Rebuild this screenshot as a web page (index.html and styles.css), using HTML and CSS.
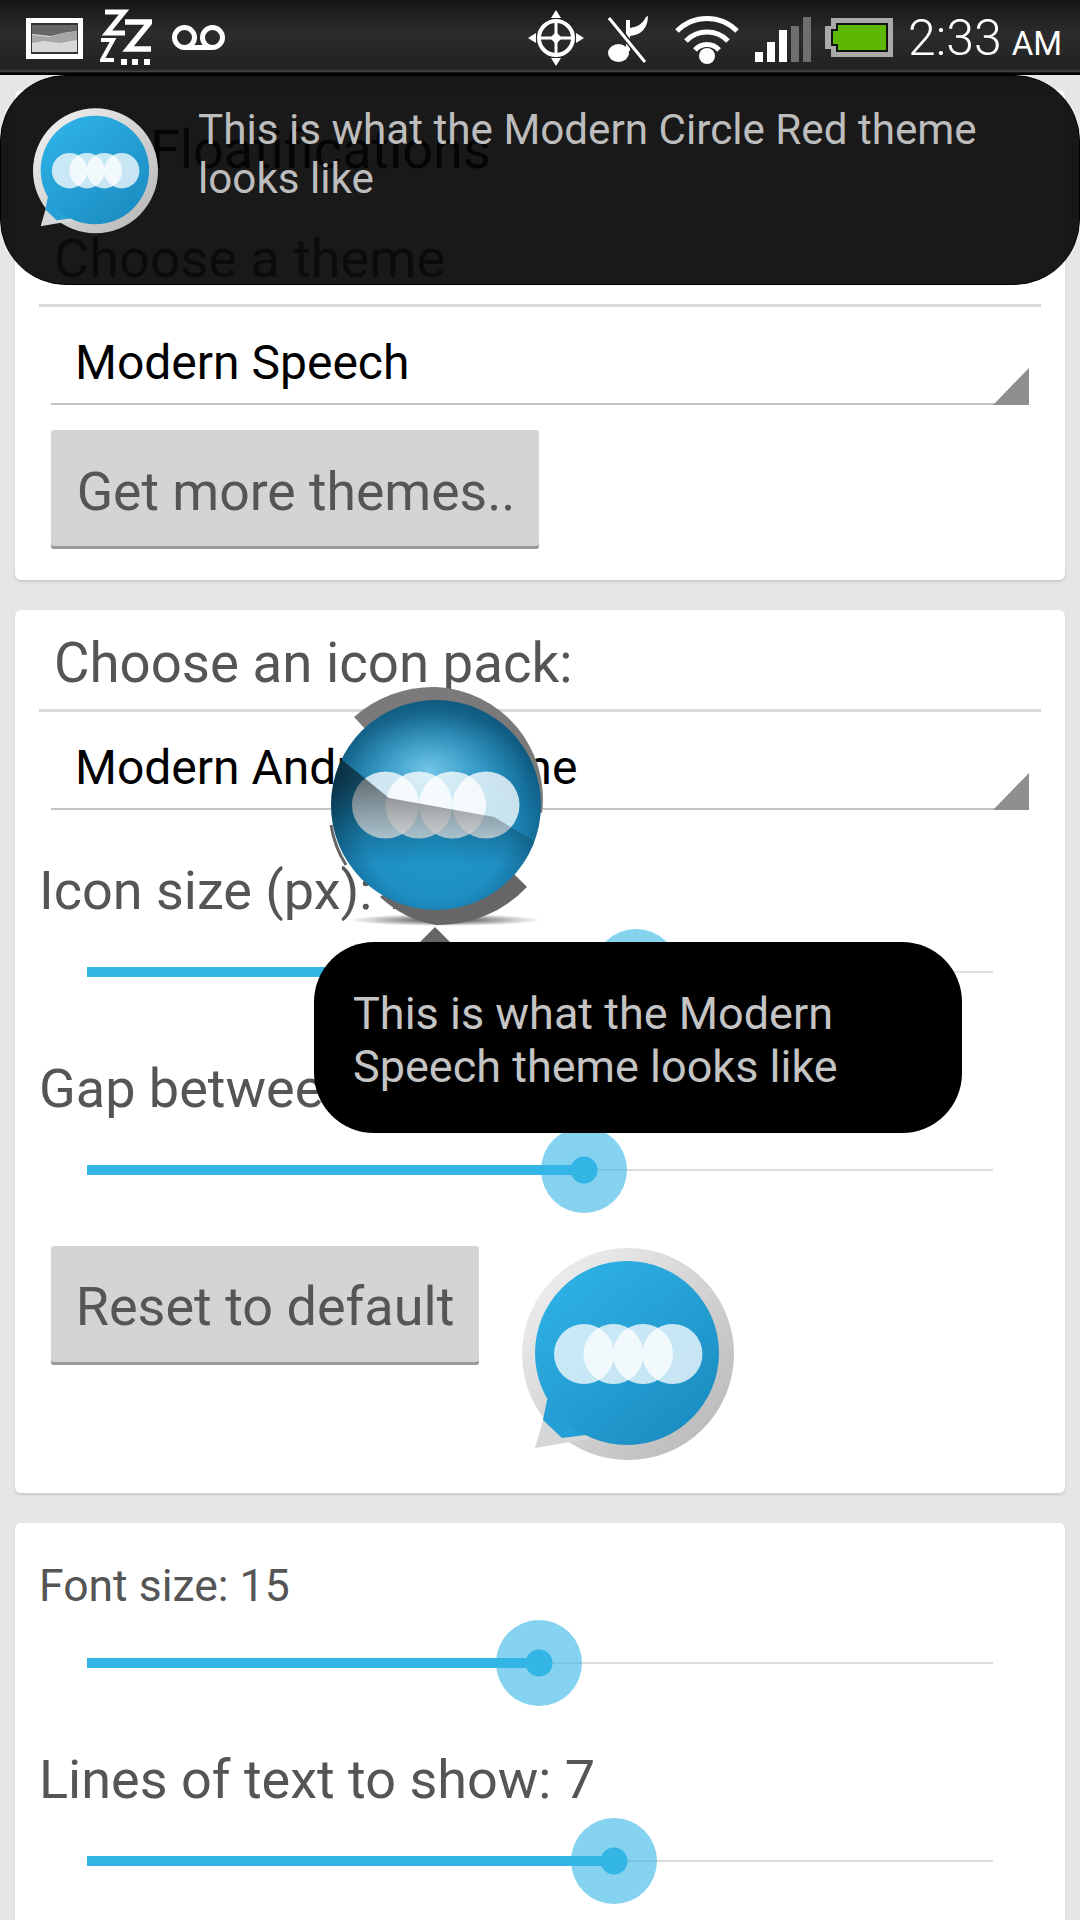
FILE: index.html
```html
<!DOCTYPE html>
<html lang="en">
<head>
<meta charset="utf-8">
<title>Floatifications</title>
<link rel="stylesheet" href="styles.css">
</head>
<body>
<svg class="defs" width="0" height="0" aria-hidden="true">
  <defs>
    <linearGradient id="ringG" x1="0" y1="0" x2="1" y2="1"><stop offset="0" stop-color="#f4f4f4"/><stop offset="1" stop-color="#b4b4b4"/></linearGradient>
    <linearGradient id="blueG" x1="0.1" y1="0" x2="0.9" y2="1"><stop offset="0" stop-color="#2fb4e8"/><stop offset="1" stop-color="#1a8abf"/></linearGradient>
    <radialGradient id="sphereG" cx="0.5" cy="0.62" r="0.56"><stop offset="0" stop-color="#1f9ad0"/><stop offset="0.6" stop-color="#1e8fc3"/><stop offset="1" stop-color="#0f5a80"/></radialGradient>
    <radialGradient id="glowG" cx="0.5" cy="0.5" r="0.5"><stop offset="0" stop-color="#74c6e6"/><stop offset="1" stop-color="#2a8fbb" stop-opacity="0"/></radialGradient>
    <radialGradient id="shadowG" cx="0.5" cy="0.5" r="0.5"><stop offset="0" stop-color="#000" stop-opacity="0.75"/><stop offset="1" stop-color="#000" stop-opacity="0"/></radialGradient>
    <linearGradient id="shadeG" gradientUnits="userSpaceOnUse" x1="0" y1="-25" x2="0" y2="60"><stop offset="0" stop-color="#000" stop-opacity="0.5"/><stop offset="1" stop-color="#000" stop-opacity="0"/></linearGradient>
    <clipPath id="sphereClip"><circle cx="0" cy="0" r="105"/></clipPath>
    <symbol id="bubble" viewBox="0 0 212 213">
      <circle cx="106" cy="106" r="106" fill="url(#ringG)"/>
      <polygon points="13,200 28,148 72,190" fill="#d4d6d8"/>
      <polygon points="25,152 21,172 40,190 64,187 60,120" fill="#25a0d6"/>
      <circle cx="105" cy="105" r="92" fill="url(#blueG)"/>
      <g fill="#fff" fill-opacity="0.75">
        <circle cx="62" cy="106" r="30"/><circle cx="91.500" cy="106" r="30"/><circle cx="121" cy="106" r="30"/><circle cx="150.500" cy="106" r="30"/>
      </g>
    </symbol>
  </defs>
</svg>

<header class="status">
  <svg class="st-img" viewBox="0 0 57 41"><rect x="2.500" y="2.500" width="52" height="36" fill="#333" stroke="#fff" stroke-width="5"/><rect x="6" y="7" width="45" height="27" fill="#d8d8d8"/><path d="M6 7h45v6l-14 2-12 3-19-2z" fill="#666"/><path d="M6 17l17 2 14-4 14-2v9l-17 3-16-2-12 2z" fill="#a6a6a6"/></svg>
  <svg class="st-zz" viewBox="0 0 52 57"><g fill="none" stroke="#fff" stroke-linejoin="miter"><path d="M5 3h19L7 24h18" stroke-width="5"/><path d="M25 13h25L28 40h23" stroke-width="5.500"/><path d="M1 31h12L2 51h12" stroke-width="4"/></g><g fill="#fff"><rect x="21" y="50" width="6" height="6"/><rect x="32" y="50" width="6" height="6"/><rect x="44" y="50" width="6" height="6"/></g></svg>
  <svg class="st-vm" viewBox="0 0 53 25"><g fill="none" stroke="#fff" stroke-width="5"><circle cx="12.500" cy="12.500" r="10"/><circle cx="40.500" cy="12.500" r="10"/><path d="M12 22.500h29"/></g></svg>
  <svg class="st-gps" viewBox="0 0 56 56"><g fill="none" stroke="#fff"><circle cx="28" cy="28" r="17" stroke-width="4"/><path d="M28 11v34M11 28h34" stroke-width="3"/></g><g fill="#fff"><polygon points="28,22 34,28 28,34 22,28"/><polygon points="28,0 23,8 33,8"/><polygon points="28,56 23,48 33,48"/><polygon points="0,28 8,23 8,33"/><polygon points="56,28 48,23 48,33"/></g></svg>
  <svg class="st-mus" viewBox="0 0 40 50"><g fill="#fff"><ellipse cx="10.500" cy="40" rx="10.500" ry="9"/><path d="M18 38V7h4v8c6-1 12-3 16-11l2-1c0 12-7 19-18 20v15z"/></g><path d="M2 6l35 43" stroke="#252525" stroke-width="6"/><path d="M1 5l36 44" stroke="#fff" stroke-width="3"/></svg>
  <svg class="st-wifi" viewBox="0 0 64 53"><g fill="none" stroke="#fff" stroke-width="5"><path d="M2 20a42 42 0 0 1 60 0"/><path d="M11 30a29 29 0 0 1 42 0"/><path d="M20 39a16 16 0 0 1 24 0"/></g><circle cx="32" cy="45" r="8" fill="#fff"/></svg>
  <svg class="st-sig" viewBox="0 0 56 45"><g fill="#fff"><rect x="0" y="35" width="8" height="10"/><rect x="12" y="25" width="8" height="20"/><rect x="24" y="13" width="8" height="32"/></g><g fill="#6f6f6f"><rect x="36" y="9" width="8" height="36"/><rect x="48" y="0" width="8" height="45"/></g></svg>
  <svg class="st-bat" viewBox="0 0 68 39"><path d="M6 0h62v39H6v-8H0V8h6z" fill="#aaa"/><path d="M11 5h52v29H11v-6H6V11h5z" fill="#111"/><path d="M13 7h48v25H13v-6H8V13h5z" fill="#5cb800"/></svg>
  <div class="clock">2:33<span class="ampm">AM</span></div>
</header>

<main class="page">
  <section class="card">
    <h1 class="title">Floatifications</h1>
    <h2 class="label-big top-gap">Choose a theme</h2>
    <div class="rule"></div>
    <div class="spinner">Modern Speech</div>
    <button class="btn btn-more">Get more themes..</button>
  </section>

  <section class="card card-two">
    <h2 class="label-big">Choose an icon pack:</h2>
    <div class="rule"></div>
    <div class="spinner">Modern Android Theme</div>
    <div class="label icon-label">Icon size (px): 70</div>
    <div class="slider slider-one"><div class="fill" style="width:550px"></div></div>
    <div class="label gap-label">Gap between icons: 50</div>
    <div class="slider"><div class="fill" style="width:498px"></div></div>
    <div class="reset-row">
      <button class="btn btn-reset">Reset to default</button>
      <svg class="preview"><use href="#bubble"/></svg>
    </div>
  </section>

  <section class="card card-three">
    <div class="label label-small">Font size: 15</div>
    <div class="slider slider-a"><div class="fill" style="width:453px"></div></div>
    <div class="label lines-label">Lines of text to show: 7</div>
    <div class="slider slider-b"><div class="fill" style="width:528px"></div></div>
  </section>
</main>

<aside class="toast-top">
  <svg class="toast-icon"><use href="#bubble"/></svg>
  <p class="toast-top-text">This is what the Modern Circle Red theme looks like</p>
</aside>

<svg class="float-icon" viewBox="-130 -130 260 270">
  <ellipse cx="9" cy="115" rx="96" ry="6" fill="url(#shadowG)"/>
  <path d="M-82 -88A120 120 0 0 1 0 -118A112 112 0 0 1 106 8L50 0L-68 -73Z" fill="#7a7a7a"/>
  <path d="M91 82A122 122 0 0 1 0 120A110 110 0 0 1 -56 92L0 50L74 65Z" fill="#666"/>
  <path d="M-105 20A106 106 0 0 0 -90 60" fill="none" stroke="#666" stroke-width="3"/>
  <polygon points="-1,122 -16,137 14,137" fill="#666"/>
  <circle cx="0" cy="0" r="105" fill="url(#sphereG)"/>
  <g clip-path="url(#sphereClip)">
    <ellipse cx="-7" cy="-35" rx="100" ry="70" fill="url(#glowG)"/>
    <g fill="#fff" fill-opacity="0.76">
      <circle cx="-50.500" cy="0" r="33.500"/><circle cx="-17" cy="0" r="33.500"/><circle cx="16.500" cy="0" r="33.500"/><circle cx="50" cy="0" r="33.500"/>
    </g>
    <polygon points="-95,-46 -47,-7 58,12 98,36 98,105 -105,105 -105,-46" fill="url(#shadeG)"/>
  </g>
</svg>

<aside class="toast-mid">This is what the Modern Speech theme looks like</aside>
</body>
</html>
```

FILE: styles.css
```css
* { box-sizing: border-box; }
html, body { margin: 0; padding: 0; }
body {
  position: relative;
  width: 1080px;
  height: 1920px;
  overflow: hidden;
  background: #e6e6e6;
  font-family: Roboto, "Liberation Sans", sans-serif;
  color: #555;
}
.defs { position: absolute; }

.status {
  display: flex;
  align-items: center;
  height: 75px;
  padding: 0 20px 3px 26px;
  background: linear-gradient(#161616, #2c2c2c 45%, #222 92%, #4a4a4a 96%, #000 97%);
}
.status svg { flex: none; display: block; }
.st-img { width: 57px; height: 41px; margin-top: 4px; }
.st-zz { width: 52px; height: 57px; margin-left: 17px; margin-top: 3px; }
.st-vm { width: 53px; height: 25px; margin-left: 20px; margin-top: 3px; }
.st-gps { width: 56px; height: 56px; margin-left: 303px; margin-top: 4px; }
.st-mus { width: 40px; height: 50px; margin-left: 24px; margin-top: 4px; }
.st-wifi { width: 64px; height: 53px; margin-left: 27px; margin-top: 3px; }
.st-sig { width: 56px; height: 45px; margin-left: 16px; margin-top: 7px; }
.st-bat { width: 68px; height: 39px; margin-left: 14px; margin-top: 3px; }
.clock { margin-left: 15px; font-size: 50px; font-weight: 300; color: #fff; white-space: nowrap; margin-top: 4px; }
.ampm { font-size: 33px; margin-left: 10px; font-weight: 400; }

.page { display: flex; flex-direction: column; gap: 30px; padding: 15px 15px 0; }
.card {
  background: #fff;
  border-radius: 6px;
  box-shadow: 0 2px 3px rgba(0, 0, 0, 0.12);
  padding: 30px 24px 31px;
}
.card-two { padding-top: 23px; padding-bottom: 32px; }
.card-three { padding-top: 32px; }

.title { margin: 0; padding-left: 111px; height: 60px; line-height: 60px; font-size: 54px; font-weight: 400; color: #000; }
.label-big { margin: 0; padding-left: 15px; height: 60px; line-height: 60px; font-size: 54px; font-weight: 400; color: #555; }
.card-two .label-big { font-size: 54.600px; }
.top-gap { margin-top: 49px; }
.rule { height: 3px; margin-top: 16px; background: #d9d9d9; }
.top-gap + .rule { margin-top: 15px; }

.spinner {
  position: relative;
  height: 98px;
  margin: 0 12px;
  padding: 15px 0 0 24px;
  display: flex;
  align-items: center;
  border-bottom: 2px solid #c4c4c4;
  font-size: 48px;
  color: #000;
}
.spinner::after {
  content: "";
  position: absolute;
  right: 0;
  bottom: -2px;
  width: 36px;
  height: 37px;
  background: #8f8f8f;
  clip-path: polygon(100% 0, 100% 100%, 0 100%);
}

.btn {
  display: block;
  height: 119px;
  margin: 25px 0 0 12px;
  padding: 4px 0 0;
  border: 0;
  border-radius: 3px;
  background: #d4d4d4;
  box-shadow: inset 0 -3px 0 #9a9a9a;
  font-family: inherit;
  font-size: 54px;
  color: #555;
}
.btn-more { width: 488px; font-size: 53.500px; padding-left: 2px; }
.btn-reset { width: 428px; margin: 0 0 0 12px; flex: none; padding-top: 2px; }

.label { height: 60px; line-height: 62px; padding-left: 0; font-size: 54px; color: #555; white-space: nowrap; }
.icon-label { margin-top: 50px; }
.gap-label { margin-top: 43px; }
.label-small { font-size: 44.500px; }
.lines-label { margin-top: 44px; line-height: 60px; }

.slider { position: relative; height: 86px; margin: 9px 48px 0; }
.slider::before { content: ""; position: absolute; left: 0; right: 0; top: 42px; height: 2px; background: #ddd; }
.fill { position: relative; height: 10px; top: 38px; background: #33b5e5; }
.fill::after {
  content: "";
  position: absolute;
  right: -42px;
  top: -38px;
  width: 86px;
  height: 86px;
  border-radius: 50%;
  background: radial-gradient(circle, #33b5e5 0 13px, rgba(51, 181, 229, 0.6) 14px);
}
.slider-a { margin-top: 5px; }
.slider-b { margin-top: 8px; }

.reset-row { display: flex; align-items: flex-start; margin-top: 33px; height: 215px; }
.preview { width: 212px; height: 213px; margin: 2px 0 0 43px; flex: none; display: block; }

.toast-top {
  position: absolute;
  left: 0;
  top: 75px;
  width: 1080px;
  height: 210px;
  display: flex;
  border-radius: 66px;
  border: 1px solid #000;
  background: rgba(5, 5, 5, 0.923);
  padding: 32px 80px 0 32px;
}
.toast-icon { width: 125px; height: 126px; flex: none; display: block; }
.toast-top-text { margin: -3px 0 0 40px; font-size: 42.200px; line-height: 49px; color: #bdbdbd; font-weight: 400; }

.float-icon { position: absolute; left: 306px; top: 675px; width: 260px; height: 270px; }

.toast-mid {
  position: absolute;
  left: 314px;
  top: 942px;
  width: 648px;
  height: 191px;
  padding: 45px 40px 0 39px;
  border-radius: 60px;
  background: #000;
  color: #c4c4c4;
  font-size: 45px;
  line-height: 53px;
  font-weight: 400;
}
```
